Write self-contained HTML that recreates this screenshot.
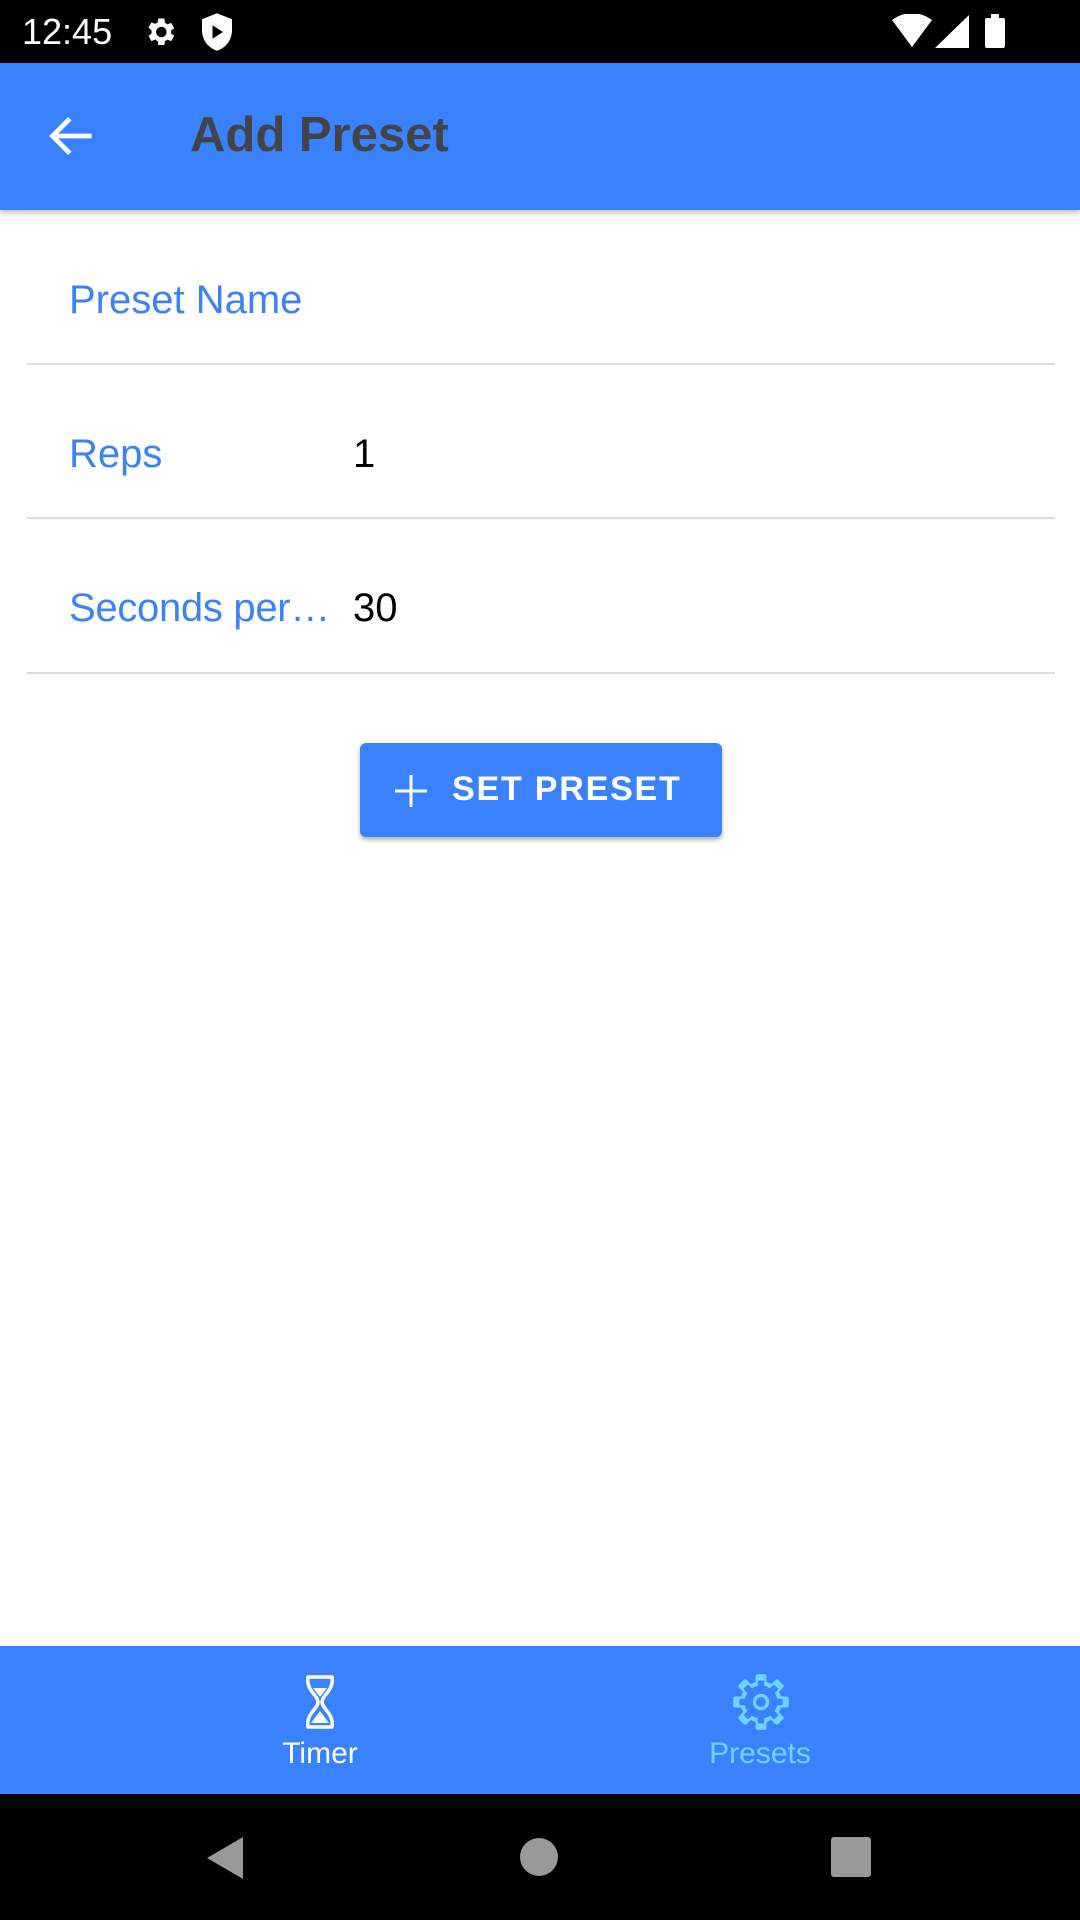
<!DOCTYPE html>
<html><head><meta charset="utf-8"><style>
*{margin:0;padding:0;box-sizing:border-box}
body{width:1080px;height:1920px;position:relative;overflow:hidden;background:#fff;font-family:"Liberation Sans",sans-serif}
.abs{position:absolute}
.lbl{position:absolute;left:69px;font-size:40px;color:#3b82f6;line-height:1}
.val{position:absolute;left:353px;font-size:40px;color:#000;line-height:1}
.div{position:absolute;left:27px;width:1028px;height:2px;background:#dcdcdc}
</style></head><body>
<div class="abs" style="left:0;top:0;width:1080px;height:63px;background:#000"></div>
<div class="abs" style="left:22px;top:12px;color:#fff;font-size:36px;line-height:40px">12:45</div>
<svg class="abs" style="left:142px;top:14px" width="36" height="36" viewBox="0 0 24 24"><path fill="#fff" d="M19.4 13a7.5 7.5 0 000-2l2.1-1.6-2-3.5-2.5 1a7 7 0 00-1.7-1L14.9 3h-4l-.4 2.6a7 7 0 00-1.7 1l-2.5-1-2 3.5L6.4 11a7.5 7.5 0 000 2l-2.1 1.6 2 3.5 2.5-1a7 7 0 001.7 1l.4 2.6h4l.4-2.6a7 7 0 001.7-1l2.5 1 2-3.5zM12.9 15.5a3.5 3.5 0 110-7 3.5 3.5 0 010 7z"/></svg>
<svg class="abs" style="left:202px;top:13px" width="30" height="38" viewBox="0 0 20 25"><path fill="#fff" d="M10 0L0 4v7c0 7 4 12 10 14 6-2 10-7 10-14V4z"/><path fill="#000" d="M7 8v9l7-4.5z"/></svg>
<svg class="abs" style="left:892px;top:14px" width="40" height="34" viewBox="0 0 40 34"><path fill="#fff" d="M0 6Q20-8 40 6L20 33z"/></svg>
<svg class="abs" style="left:935px;top:15px" width="34" height="33" viewBox="0 0 34 33"><path fill="#fff" d="M34 0V33H0z"/></svg>
<div class="abs" style="left:985px;top:18px;width:20px;height:30px;background:#fff;border-radius:2px"></div>
<div class="abs" style="left:991px;top:14px;width:8px;height:5px;background:#fff"></div>

<div class="abs" style="left:0;top:63px;width:1080px;height:147px;background:#3a81fe;box-shadow:0 3px 6px rgba(0,0,0,.25)"></div>
<svg class="abs" style="left:46px;top:110px" width="52" height="52" viewBox="0 0 24 24"><path fill="none" stroke="#fff" stroke-width="2.2" d="M21 12H4M11 4l-8 8 8 8"/></svg>
<div class="abs" style="left:190px;top:107px;font-size:49px;font-weight:bold;color:#444;line-height:56px">Add Preset</div>

<div class="lbl" style="top:280px">Preset Name</div>
<div class="div" style="top:363px"></div>
<div class="lbl" style="top:434px">Reps</div><div class="val" style="top:434px">1</div>
<div class="div" style="top:517px"></div>
<div class="lbl" style="top:588px;letter-spacing:-0.3px">Seconds per…</div><div class="val" style="top:588px">30</div>
<div class="div" style="top:672px"></div>

<div class="abs" style="left:360px;top:743px;width:362px;height:94px;background:#3a81fe;border-radius:6px;box-shadow:0 3px 5px rgba(0,0,0,.3)"></div>
<svg class="abs" style="left:394px;top:774px" width="34" height="34" viewBox="0 0 34 34"><path stroke="#fff" stroke-width="3" d="M17 1V33M1 17H33"/></svg>
<div class="abs" style="left:452px;top:767px;font-size:34px;font-weight:bold;color:#fff;letter-spacing:1.8px;line-height:44px">SET PRESET</div>

<div class="abs" style="left:0;top:1646px;width:1080px;height:148px;background:#3a81fe"></div>
<svg class="abs" style="left:300px;top:1675px" width="40" height="54" viewBox="0 0 40 54"><path fill="none" stroke="#fff" stroke-width="3.5" stroke-linejoin="round" d="M8 2h24c2 14-10 18-10 25s12 11 10 25H8c-2-14 10-18 10-25S6 16 8 2z"/><path fill="#fff" d="M13 13h14l-7 9zM11 48l9-12 9 12z"/></svg>
<div class="abs" style="left:220px;top:1734px;width:200px;text-align:center;color:#fff;font-size:30px;line-height:40px">Timer</div>
<svg class="abs" style="left:731px;top:1672px" width="60" height="60" viewBox="1 1 22 22">
<g fill="#6fd3ff"><circle cx="12" cy="12" r="7.6"/>
<g id="t"><rect x="10" y="1.8" width="4" height="5" rx=".8"/></g>
<use href="#t" transform="rotate(45 12 12)"/><use href="#t" transform="rotate(90 12 12)"/><use href="#t" transform="rotate(135 12 12)"/><use href="#t" transform="rotate(180 12 12)"/><use href="#t" transform="rotate(225 12 12)"/><use href="#t" transform="rotate(270 12 12)"/><use href="#t" transform="rotate(315 12 12)"/></g>
<g fill="#3a81fe" transform="translate(12 12) scale(.84) translate(-12 -12)"><circle cx="12" cy="12" r="7.2"/>
<rect x="10.6" y="2.6" width="2.8" height="5" rx=".5"/>
<use href="#t2" /><g id="t2"><rect x="10.6" y="2.6" width="2.8" height="5" rx=".5" transform="rotate(45 12 12)"/></g>
<rect x="10.6" y="2.6" width="2.8" height="5" rx=".5" transform="rotate(90 12 12)"/><rect x="10.6" y="2.6" width="2.8" height="5" rx=".5" transform="rotate(135 12 12)"/><rect x="10.6" y="2.6" width="2.8" height="5" rx=".5" transform="rotate(180 12 12)"/><rect x="10.6" y="2.6" width="2.8" height="5" rx=".5" transform="rotate(225 12 12)"/><rect x="10.6" y="2.6" width="2.8" height="5" rx=".5" transform="rotate(270 12 12)"/><rect x="10.6" y="2.6" width="2.8" height="5" rx=".5" transform="rotate(315 12 12)"/></g>
<circle cx="12" cy="12" r="2.4" fill="none" stroke="#6fd3ff" stroke-width="1.2"/></svg>
<div class="abs" style="left:660px;top:1734px;width:200px;text-align:center;color:#6fd3ff;font-size:30px;line-height:40px">Presets</div>

<div class="abs" style="left:0;top:1794px;width:1080px;height:126px;background:#000"></div>
<svg class="abs" style="left:205px;top:1836px" width="40" height="44" viewBox="0 0 40 44"><path fill="#999" d="M38 1V43L2 22z"/></svg>
<div class="abs" style="left:520px;top:1838px;width:38px;height:38px;border-radius:50%;background:#999"></div>
<div class="abs" style="left:831px;top:1837px;width:40px;height:40px;border-radius:3px;background:#999"></div>
</body></html>
